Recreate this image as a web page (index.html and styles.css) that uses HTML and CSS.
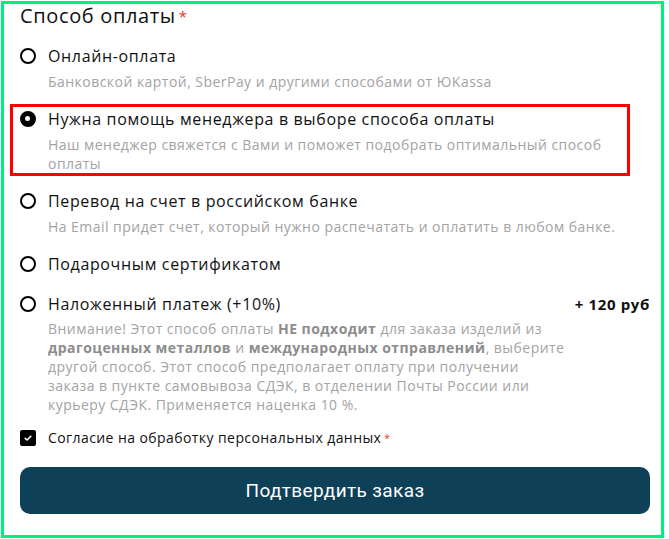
FILE: index.html
```html
<!DOCTYPE html>
<html lang="ru">
<head>
<meta charset="utf-8">
<link rel="stylesheet" href="styles.css">
</head>
<body>
<div class="frame">
  <div class="heading">Способ оплаты<span class="req">*</span></div>
  <div class="options">
    <div class="option">
      <span class="radio"></span>
      <div class="text">
        <div class="title">Онлайн-оплата</div>
        <div class="desc">Банковской картой, SberPay и другими способами от ЮKassa</div>
      </div>
    </div>
    <div class="option selected">
      <span class="highlight"></span>
      <span class="radio checked"></span>
      <div class="text">
        <div class="title">Нужна помощь менеджера в выборе способа оплаты</div>
        <div class="desc">Наш менеджер свяжется с Вами и поможет подобрать оптимальный способ оплаты</div>
      </div>
    </div>
    <div class="option">
      <span class="radio"></span>
      <div class="text">
        <div class="title">Перевод на счет в российском банке</div>
        <div class="desc">На Email придет счет, который нужно распечатать и оплатить в любом банке.</div>
      </div>
    </div>
    <div class="option">
      <span class="radio"></span>
      <div class="text">
        <div class="title">Подарочным сертификатом</div>
      </div>
    </div>
    <div class="option">
      <span class="radio"></span>
      <div class="text narrow">
        <div class="title">Наложенный платеж (+10%)</div>
        <div class="desc">Внимание! Этот способ оплаты <b>НЕ подходит</b> для заказа изделий из <b>драгоценных металлов</b> и <b>международных отправлений</b>, выберите другой способ. Этот способ предполагает оплату при получении заказа в пункте самовывоза СДЭК, в отделении Почты России или курьеру СДЭК. Применяется наценка 10 %.</div>
      </div>
      <div class="price">+ 120 руб</div>
    </div>
  </div>
  <label class="consent">
    <span class="checkbox"><svg width="10" height="10" viewBox="0 0 10 10"><path d="M2.2 5.3 L4.1 7 L7.8 3.2" fill="none" stroke="#fff" stroke-width="1.6" stroke-linecap="round" stroke-linejoin="round"/></svg></span>
    <span>Согласие на обработку персональных данных<span class="req">*</span></span>
  </label>
  <button class="submit">Подтвердить заказ</button>
</div>
</body>
</html>
```
FILE: styles.css
```css
* { box-sizing: border-box; }
html, body { margin: 0; padding: 0; background: #fff; }
body {
  font-family: "Open Sans", "Noto Sans", sans-serif;
  color: #111;
  letter-spacing: 0.04em;
}
.frame {
  margin: 1px;
  width: 663px;
  height: 537px;
  border: 3px solid #00f07f;
  padding: 0 11px 0 16px;
}
.heading {
  font-size: 20px;
  line-height: 24px;
  color: #111;
}
.req {
  color: #e8322c;
  font-size: 0.75em;
  vertical-align: top;
  margin-left: 3px;
}
.options {
  margin-top: 16px;
  display: flex;
  flex-direction: column;
  gap: 16px;
}
.option {
  position: relative;
  display: flex;
  align-items: flex-start;
}
.highlight {
  position: absolute;
  left: -10px;
  top: -3px;
  width: 620px;
  height: 72px;
  border: 3px solid #ff0000;
  pointer-events: none;
}
.radio {
  flex: none;
  width: 16px;
  height: 16px;
  border: 2.5px solid #000;
  border-radius: 50%;
  margin-top: 4px;
  margin-right: 12px;
  position: relative;
}
.radio.checked {
  background: #000;
}
.radio.checked::after {
  content: "";
  position: absolute;
  left: 3px;
  top: 3px;
  width: 5px;
  height: 5px;
  border-radius: 50%;
  background: #fff;
}
.text { flex: 1; }
.text.narrow { flex: 0 0 520px; }
.title {
  font-size: 16px;
  line-height: 24px;
}
.desc {
  margin-top: 4px;
  font-size: 14px;
  line-height: 19px;
  color: #a3a3a3;
  letter-spacing: 0.033em;
}
.option:last-child .desc { margin-top: 3px; }
.desc b { color: #8c8c8c; font-weight: 700; }
.price {
  margin-left: auto;
  font-size: 15px;
  font-weight: 700;
  line-height: 24px;
  white-space: nowrap;
}
.consent {
  display: flex;
  align-items: center;
  margin-top: 14px;
  font-size: 14px;
  line-height: 20px;
  letter-spacing: 0.03em;
}
.checkbox {
  flex: none;
  width: 16px;
  height: 16px;
  border-radius: 2px;
  background: #000;
  display: flex;
  align-items: center;
  justify-content: center;
  margin-right: 12px;
}
.checkbox svg { display: block; }
.submit {
  display: block;
  width: 630px;
  height: 47px;
  margin-top: 19px;
  border: none;
  border-radius: 10px;
  background: #0e4058;
  color: #fff;
  font-family: Roboto, "Noto Sans", sans-serif;
  font-size: 19px;
  letter-spacing: 0.02em;
}
```
